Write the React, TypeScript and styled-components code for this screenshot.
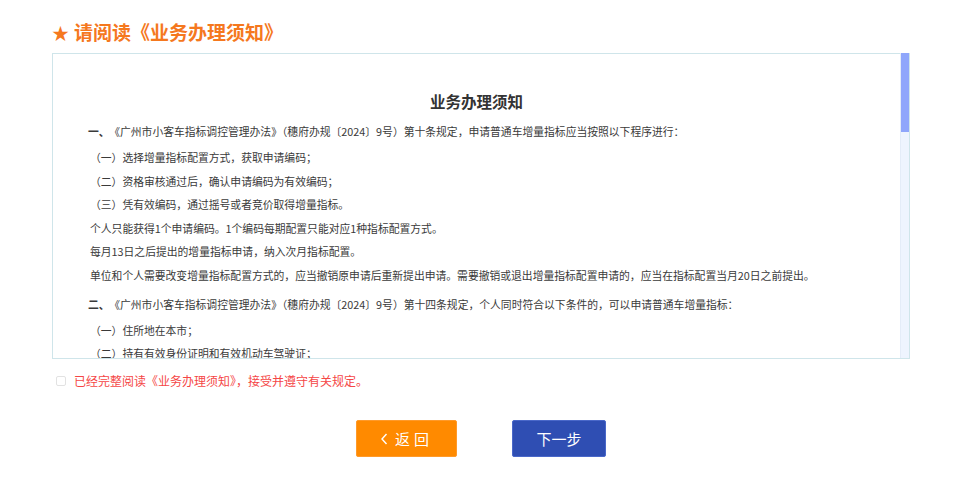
import React, { useState } from "react";
import styled, { createGlobalStyle } from "styled-components";

const GlobalStyle = createGlobalStyle`
  html, body {
    margin: 0;
    padding: 0;
    background: #ffffff;
    font-family: "Liberation Sans", "Noto Sans CJK SC", sans-serif;
  }
`;

const Page = styled.div`
  width: 858px;
  padding: 20px 0 0 52px;
`;

const Title = styled.h2`
  margin: 0 0 8px 0;
  font-size: 19px;
  line-height: 24px;
  font-weight: 700;
  color: #f5781e;
  font-family: "Noto Sans CJK SC", sans-serif;
  white-space: nowrap;
`;

const Star = styled.span`
  font-size: 17px;
  margin-right: 5px;
`;

const NoticeBox = styled.div`
  display: flex;
  height: 304px;
  border: 1px solid #cfe5ea;
`;

const NoticeBody = styled.div`
  flex: 1;
  overflow: hidden;
  padding-top: 35px;
`;

const ScrollTrack = styled.div`
  width: 8px;
  margin-top: -1px;
  background: #eef4fe;
  border-left: 1px solid #e4ecf8;
`;

const ScrollThumb = styled.div`
  height: 79px;
  background: #8fa6fb;
`;

const NoticeHeading = styled.h3`
  margin: 0 0 7px 0;
  text-align: center;
  font-size: 15.5px;
  line-height: 24px;
  font-weight: 700;
  color: #333333;
  font-family: "Noto Sans CJK SC", sans-serif;
`;

const Section = styled.div`
  padding: 0 36px 0 35px;
  & + & {
    margin-top: 5px;
  }
`;

const Para = styled.p<{ $lead?: boolean }>`
  margin: 0 0 ${(p) => (p.$lead ? "2.5px" : "0")} 0;
  padding-left: ${(p) => (p.$lead ? "0" : "2px")};
  font-size: 10.8px;
  line-height: 23.6px;
  color: #3a3a3a;
  font-family: "Noto Sans CJK SC", sans-serif;
  white-space: nowrap;
`;

const Num = styled.b`
  font-weight: 700;
  margin-right: 5px;
`;

const AgreeRow = styled.label`
  display: flex;
  align-items: center;
  gap: 8px;
  margin: 12px 0 0 4px;
  line-height: 20px;
  cursor: pointer;
`;

const Check = styled.input`
  appearance: none;
  flex: none;
  width: 10px;
  height: 10px;
  margin: 0;
  border: 1px solid #e2e2e2;
  border-radius: 2px;
  background: #fff;
  &:checked {
    background: #2f4eb3;
    border-color: #2f4eb3;
  }
`;

const AgreeText = styled.span`
  font-size: 12px;
  line-height: 20px;
  color: #f54646;
  font-family: "Noto Sans CJK SC", sans-serif;
  white-space: nowrap;
`;

const Buttons = styled.div`
  display: flex;
  justify-content: center;
  gap: 55px;
  margin-top: 29px;
`;

const Button = styled.button<{ $variant: "back" | "next" }>`
  height: 37px;
  width: ${(p) => (p.$variant === "back" ? "101px" : "94px")};
  border-radius: 2px;
  border: 1px solid ${(p) => (p.$variant === "back" ? "#ff9a2a" : "#4a68c9")};
  background: ${(p) => (p.$variant === "back" ? "#ff8a00" : "#2f4eb3")};
  color: #ffffff;
  font-size: 15px;
  font-family: "Noto Sans CJK SC", sans-serif;
  letter-spacing: ${(p) => (p.$variant === "back" ? "4px" : "0")};
  display: flex;
  align-items: center;
  justify-content: center;
  gap: 6px;
  cursor: pointer;
  padding: 0;
`;

const Chevron = () => (
  <svg width="9" height="14" viewBox="0 0 9 14" aria-hidden="true">
    <path d="M6.5 2 L2 7 L6.5 12" fill="none" stroke="#fff" strokeWidth="1.4" />
  </svg>
);

export default function App() {
  const [agreed, setAgreed] = useState(false);
  return (
    <>
      <GlobalStyle />
      <Page>
        <Title>
          <Star>★</Star>请阅读《业务办理须知》
        </Title>
        <NoticeBox>
          <NoticeBody>
            <NoticeHeading>业务办理须知</NoticeHeading>
            <Section>
              <Para $lead>
                <Num>一、</Num>《广州市小客车指标调控管理办法》（穗府办规〔2024〕9号）第十条规定，申请普通车增量指标应当按照以下程序进行：
              </Para>
              <Para>（一）选择增量指标配置方式，获取申请编码；</Para>
              <Para>（二）资格审核通过后，确认申请编码为有效编码；</Para>
              <Para>（三）凭有效编码，通过摇号或者竞价取得增量指标。</Para>
              <Para>个人只能获得1个申请编码。1个编码每期配置只能对应1种指标配置方式。</Para>
              <Para>每月13日之后提出的增量指标申请，纳入次月指标配置。</Para>
              <Para>
                单位和个人需要改变增量指标配置方式的，应当撤销原申请后重新提出申请。需要撤销或退出增量指标配置申请的，应当在指标配置当月20日之前提出。
              </Para>
            </Section>
            <Section>
              <Para $lead>
                <Num>二、</Num>《广州市小客车指标调控管理办法》（穗府办规〔2024〕9号）第十四条规定，个人同时符合以下条件的，可以申请普通车增量指标：
              </Para>
              <Para>（一）住所地在本市；</Para>
              <Para>（二）持有有效身份证明和有效机动车驾驶证；</Para>
            </Section>
          </NoticeBody>
          <ScrollTrack>
            <ScrollThumb />
          </ScrollTrack>
        </NoticeBox>
        <AgreeRow>
          <Check type="checkbox" checked={agreed} onChange={(e) => setAgreed(e.target.checked)} />
          <AgreeText>已经完整阅读《业务办理须知》，接受并遵守有关规定。</AgreeText>
        </AgreeRow>
        <Buttons>
          <Button $variant="back" type="button">
            <Chevron />
            返回
          </Button>
          <Button $variant="next" type="button">
            下一步
          </Button>
        </Buttons>
      </Page>
    </>
  );
}
